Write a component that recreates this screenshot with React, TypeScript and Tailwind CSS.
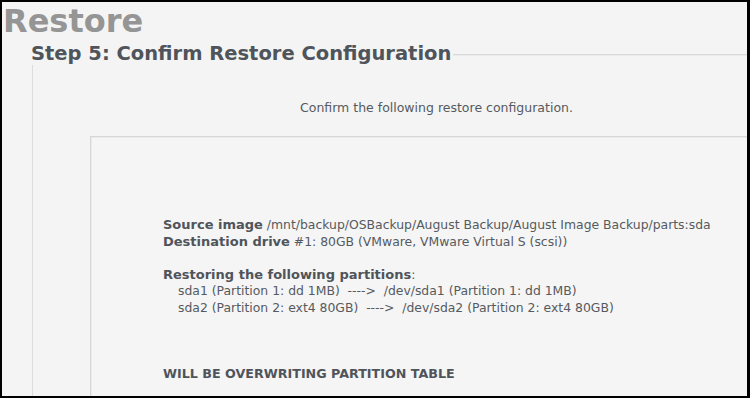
export default function App() {
  return (
    <div className="w-[750px] h-[398px] overflow-hidden bg-black pl-[2px] pt-[2px] pr-[3px] pb-[2px]">
      <div
        className="h-full overflow-hidden bg-[#f4f4f4] text-[#555a60]"
        style={{ fontFamily: '"DejaVu Sans", "Liberation Sans", sans-serif' }}
      >
        <h1 className="mt-[3px] ml-px text-[32px] leading-[32px] font-bold text-[#959595]">Restore</h1>

        <div className="ml-[30px]">
          {/* legend row */}
          <div className="mt-[6px] flex items-center">
            <h2 className="-ml-px whitespace-nowrap text-[19.5px] leading-[22px] font-bold text-[#4f545b]">
              Step 5: Confirm Restore Configuration
            </h2>
            <div className="ml-[2px] flex-1 border-t border-[#d9d9d9] shadow-[0_1px_0_#ebebeb]" />
          </div>

          <div className="border-l border-[#dcdcdc] pb-10">
            <p className="pt-[35px] pl-[267px] text-[12.5px] leading-[16px] whitespace-nowrap">
              Confirm the following restore configuration.
            </p>

            <div className="mt-[20px] ml-[57px] border-t border-l border-[#d6d6d6] bg-[#f5f5f5] shadow-[inset_1px_1px_0_#ebebeb] pt-[80px] pl-[72px] pb-10">
              <div className="text-[12.4px] leading-[16.5px] whitespace-nowrap">
                <div>
                  <b className="text-[13px] text-[#4f545b]">Source image</b> /mnt/backup/OSBackup/August Backup/August Image Backup/parts:sda
                </div>
                <div>
                  <b className="text-[13px] text-[#4f545b]">Destination drive</b> #1: 80GB (VMware, VMware Virtual S (scsi))
                </div>
                <div className="mt-[16.5px]">
                  <b className="text-[13px] text-[#4f545b]">Restoring the following partitions</b>:
                </div>
                <div className="pl-[15px] whitespace-pre">{'sda1 (Partition 1: dd 1MB)  ---->  /dev/sda1 (Partition 1: dd 1MB)'}</div>
                <div className="pl-[15px] whitespace-pre">{'sda2 (Partition 2: ext4 80GB)  ---->  /dev/sda2 (Partition 2: ext4 80GB)'}</div>
                <div className="mt-[49.5px] text-[12.7px] font-bold text-[#4f545b]">WILL BE OVERWRITING PARTITION TABLE</div>
              </div>
            </div>
          </div>
        </div>
      </div>
    </div>
  );
}
